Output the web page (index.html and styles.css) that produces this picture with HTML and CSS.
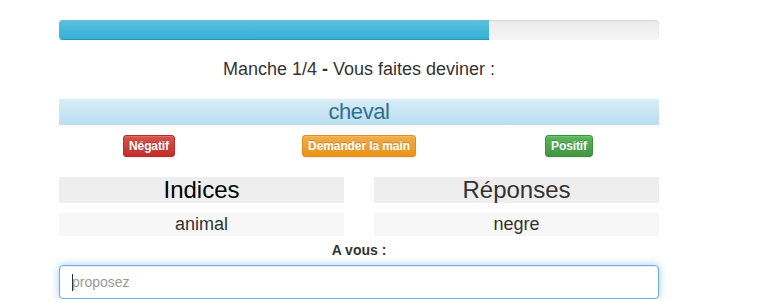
FILE: index.html
```html
<!DOCTYPE html>
<html lang="fr">
<head>
  <meta charset="UTF-8" />
  <title>Manche 1/4</title>
  <link rel="stylesheet" href="styles.css">
</head>
<body>
  <div class="game">
    <div class="progress">
      <div class="progress-bar" style="width: 71.67%;"></div>
    </div>

    <div class="round">Manche 1/4 <b>-</b> Vous faites deviner :</div>

    <div class="word">cheval</div>

    <div class="actions">
      <div class="col"><button class="btn btn-danger">Négatif</button></div>
      <div class="col"><button class="btn btn-warning">Demander la main</button></div>
      <div class="col"><button class="btn btn-success">Positif</button></div>
    </div>

    <div class="board">
      <div class="list">
        <div class="list-head head-dark">Indices</div>
        <div class="list-item">animal</div>
      </div>
      <div class="list">
        <div class="list-head">Réponses</div>
        <div class="list-item">negre</div>
      </div>
    </div>

    <div class="prompt">A vous :</div>
    <div class="field">
      <input class="guess" type="text" placeholder="proposez" autofocus />
      <span class="caret"></span>
    </div>
  </div>
</body>
</html>
```

FILE: styles.css
```css
body {
  margin: 0;
  background: #fff;
  font-family: 'Liberation Sans', Arial, sans-serif;
  color: #333;
}
.game {
  width: 600px;
  margin-left: 59px;
  padding-top: 20px;
}
.progress {
  height: 20px;
  border-radius: 4px;
  overflow: hidden;
  background: linear-gradient(#ebebeb, #f5f5f5);
  box-shadow: inset 0 1px 2px rgba(0, 0, 0, 0.1);
}
.progress-bar {
  height: 100%;
  background: linear-gradient(#5bc0de, #31b0d5);
  box-shadow: inset 0 -1px 0 rgba(0, 0, 0, 0.15);
}
.round {
  margin-top: 19px;
  font-size: 18px;
  line-height: 20px;
  text-align: center;
}
.word {
  margin-top: 20px;
  height: 26px;
  line-height: 26px;
  text-align: center;
  font-size: 22px;
  letter-spacing: -0.4px;
  color: #31708f;
  background: linear-gradient(#d9edf7, #b9def0);
}
.actions {
  display: grid;
  grid-template-columns: repeat(3, 1fr);
  gap: 30px;
  margin-top: 10px;
}
.col {
  text-align: center;
}
.btn {
  font-family: inherit;
  font-size: 12px;
  font-weight: bold;
  line-height: 18px;
  padding: 1px 5px;
  border: 1px solid;
  border-radius: 3px;
  color: #fff;
  letter-spacing: -0.1px;
  text-shadow: 0 -1px 0 rgba(0, 0, 0, 0.2);
  box-shadow: inset 0 1px 0 rgba(255, 255, 255, 0.15), 0 1px 1px rgba(0, 0, 0, 0.075);
}
.btn-danger {
  background: linear-gradient(#d9534f, #c12e2a);
  border-color: #b92c28;
}
.btn-warning {
  background: linear-gradient(#f0ad4e, #eb9316);
  border-color: #e38d13;
}
.btn-success {
  background: linear-gradient(#5cb85c, #419641);
  border-color: #3e8f3e;
}
.board {
  display: grid;
  grid-template-columns: 1fr 1fr;
  gap: 30px;
  margin-top: 20px;
}
.list-head {
  height: 26px;
  line-height: 26px;
  font-size: 24px;
  text-align: center;
  background: #eee;
}
.head-dark {
  color: #000;
}
.list-item {
  margin-top: 10px;
  height: 23px;
  line-height: 23px;
  font-size: 18px;
  text-align: center;
  background: #f7f7f7;
}
.prompt {
  margin-top: 4px;
  font-size: 14px;
  font-weight: bold;
  line-height: 20px;
  text-align: center;
}
.field {
  position: relative;
  margin-top: 5px;
}
.guess {
  display: block;
  box-sizing: border-box;
  width: 100%;
  height: 34px;
  padding: 6px 12px;
  font-family: inherit;
  font-size: 14px;
  color: #555;
  border: 1px solid #66afe9;
  border-radius: 4px;
  outline: 0;
  caret-color: transparent;
  box-shadow: inset 0 1px 1px rgba(0, 0, 0, 0.075), 0 0 8px rgba(102, 175, 233, 0.6);
}
.guess::placeholder {
  color: #999;
}
.caret {
  position: absolute;
  left: 13px;
  top: 9px;
  width: 1px;
  height: 17px;
  background: #333;
}
```
